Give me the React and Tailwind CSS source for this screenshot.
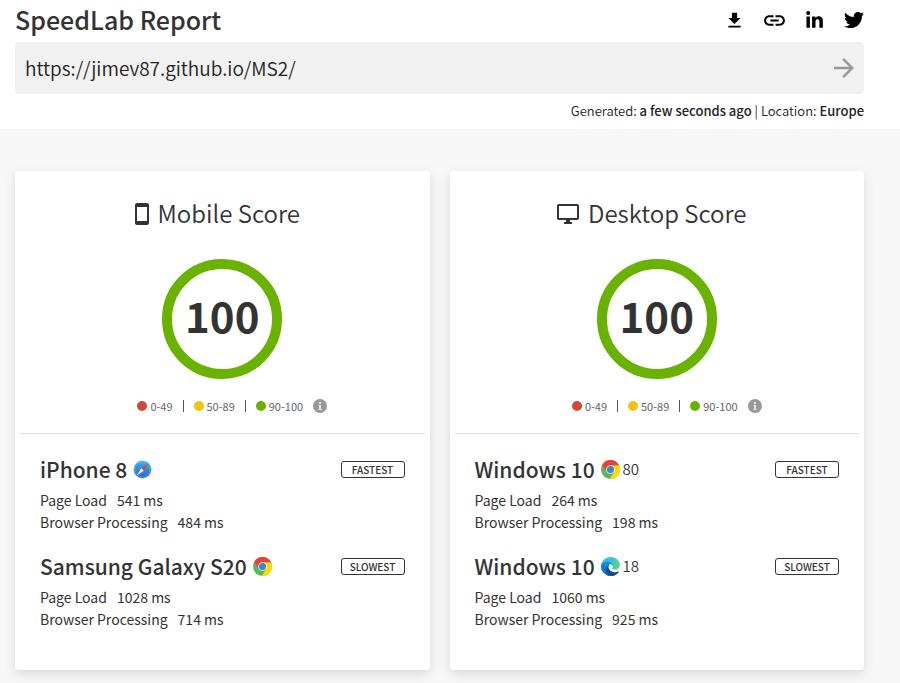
import React from "react";
import { FaLinkedinIn, FaTwitter } from "react-icons/fa";
import { MdInsertLink, MdArrowForward, MdGetApp } from "react-icons/md";

function PhoneIcon() {
  return (
    <svg viewBox="5 1 14 22" className="h-[22px] w-[14px] fill-current" aria-hidden="true">
      <path d="M17 1.01L7 1c-1.1 0-1.99.9-1.99 2v18c0 1.1.89 2 1.99 2h10c1.1 0 2-.9 2-2V3c0-1.1-.9-1.99-2-1.99zM17 19H7V5h10v14z" />
    </svg>
  );
}

function MonitorIcon() {
  return (
    <svg viewBox="1 2 22 20" className="h-5 w-[22px] fill-current" aria-hidden="true">
      <path d="M21 2H3c-1.1 0-2 .9-2 2v12c0 1.1.9 2 2 2h7v2H8v2h8v-2h-2v-2h7c1.1 0 2-.9 2-2V4c0-1.1-.9-2-2-2zm0 14H3V4h18v12z" />
    </svg>
  );
}

function InfoIcon() {
  return (
    <svg viewBox="0 0 14 14" className="size-[14px]" aria-hidden="true">
      <circle cx="7" cy="7" r="7" fill="#999" />
      <rect x="6" y="3" width="2" height="2" fill="#e6e6e6" />
      <path d="M5.500 6H8v4h.8v1H5.400v-1H6V7h-.5z" fill="#e6e6e6" />
    </svg>
  );
}

function ChromeIcon() {
  return (
    <svg viewBox="0 0 48 48" className="size-[19px]" role="img" aria-label="Chrome">
      <circle cx="24" cy="24" r="24" fill="#5bb75b" />
      <path d="M24 13H45.300A24 24 0 0 1 22 47.900L33.500 29.500z" fill="#ffdd00" />
      <path d="M3.200 12A24 24 0 0 1 45.300 13H24L14.500 29.500z" fill="#ee4035" />
      <circle cx="24" cy="24" r="11" fill="#fff" />
      <circle cx="24" cy="24" r="9" fill="#3f86c9" />
    </svg>
  );
}

function SafariIcon() {
  return (
    <svg viewBox="0 0 48 48" className="size-[19px]" role="img" aria-label="Safari">
      <defs>
        <linearGradient id="safari-dial" x1="0" y1="0" x2="0" y2="1">
          <stop offset="0" stopColor="#2fb4ee" />
          <stop offset="1" stopColor="#2b63c8" />
        </linearGradient>
      </defs>
      <circle cx="24" cy="24" r="23.500" fill="#c3d0df" />
      <circle cx="24" cy="24" r="21.500" fill="url(#safari-dial)" />
      <circle cx="24" cy="24" r="18.500" fill="none" stroke="#a9dcf7" strokeWidth="2" strokeDasharray="1.500 3.300" />
      <path d="M39 8L21 21L27 27z" fill="#f0353a" />
      <path d="M9 40L21 21L27 27z" fill="#f2f2f2" />
    </svg>
  );
}

function EdgeIcon() {
  return (
    <svg viewBox="0 0 256 256" className="size-[19px]" role="img" aria-label="Edge">
      <defs>
        <linearGradient id="edge-wave" x1="0" y1="0.300" x2="1" y2="0.600">
          <stop offset="0" stopColor="#2fb6ee" />
          <stop offset="0.500" stopColor="#35c1e1" />
          <stop offset="1" stopColor="#5edc6c" />
        </linearGradient>
        <linearGradient id="edge-body" x1="0" y1="0" x2="0" y2="1">
          <stop offset="0" stopColor="#1b9de2" />
          <stop offset="0.500" stopColor="#0a7ad6" />
          <stop offset="1" stopColor="#0669bd" />
        </linearGradient>
      </defs>
      <path d="M235.700 195.500a93.700 93.700 0 0 1-10.600 4.700 101.900 101.900 0 0 1-35.900 6.400c-47.300 0-88.500-32.500-88.500-74.300a31.500 31.500 0 0 1 16.400-27.300c-42.800 1.800-53.800 46.400-53.800 72.500 0 73.900 68.100 81.400 82.800 81.400 7.900 0 19.800-2.300 27-4.600l1.300-.4a128.300 128.300 0 0 0 66.600-52.800 4 4 0 0 0-5.300-5.600z" fill="#114a8b" />
      <path d="M105.700 241.400a79.200 79.200 0 0 1-22.700-21.300 80.700 80.700 0 0 1 29.500-120c3.200-1.500 8.500-4.100 15.600-4a32.400 32.400 0 0 1 25.700 13 31.900 31.900 0 0 1 6.300 18.700c0-.2 24.500-79.600-80-79.600-43.900 0-80 41.600-80 78.200a130.200 130.200 0 0 0 12.100 56 128 128 0 0 0 156.400 67 75.500 75.500 0 0 1-62.800-8z" fill="url(#edge-body)" />
      <path d="M152.300 148.900c-.9 1-3.400 2.500-3.400 5.600 0 2.600 1.700 5.200 4.800 7.300 14.300 10 41.400 8.600 41.500 8.600a59.600 59.600 0 0 0 30.300-8.300 61.400 61.400 0 0 0 30.400-52.900c.3-22.400-8-37.300-11.300-43.900C223.500 23.900 177.700 0 128 0A128 128 0 0 0 0 126.200c.5-36.500 36.800-66 80-66 3.500 0 23.500.3 42 10.100 16.300 8.600 24.900 19 30.800 29.200 6.200 10.700 7.300 24.100 7.300 29.500s-2.700 13.300-7.800 19.900z" fill="url(#edge-wave)" />
    </svg>
  );
}

const BROWSERS = { chrome: ChromeIcon, safari: SafariIcon, edge: EdgeIcon };

const CARDS = [
  {
    title: "Mobile Score",
    Icon: PhoneIcon,
    score: 100,
    devices: [
      { name: "iPhone 8", browser: "safari", tag: "FASTEST", load: 541, processing: 484 },
      { name: "Samsung Galaxy S20", browser: "chrome", tag: "SLOWEST", load: 1028, processing: 714 },
    ],
  },
  {
    title: "Desktop Score",
    Icon: MonitorIcon,
    score: 100,
    devices: [
      { name: "Windows 10", browser: "chrome", version: "80", tag: "FASTEST", load: 264, processing: 198 },
      { name: "Windows 10", browser: "edge", version: "18", tag: "SLOWEST", load: 1060, processing: 925 },
    ],
  },
];

function Legend() {
  return (
    <div className="mt-[18px] flex h-[18px] items-center justify-center gap-[10px] pl-5 text-[11px] text-[#666]">
      <span className="flex items-center gap-[3px]">
        <span className="size-[10px] rounded-full bg-[#d34836]" />
        0-49
      </span>
      <span className="h-3 w-px bg-[#555]" />
      <span className="flex items-center gap-[3px]">
        <span className="size-[10px] rounded-full bg-[#f0c30f]" />
        50-89
      </span>
      <span className="h-3 w-px bg-[#555]" />
      <span className="flex items-center gap-[3px]">
        <span className="size-[10px] rounded-full bg-[#69b200]" />
        90-100
      </span>
      <button type="button" aria-label="About the score">
        <InfoIcon />
      </button>
    </div>
  );
}

function Device({ name, browser, version, tag, load, processing }) {
  const Browser = BROWSERS[browser];
  return (
    <div>
      <div className="flex h-[30px] items-center pb-px">
        <h3 className="pb-[2px] text-[21px] leading-[30px] font-medium">{name}</h3>
        <span className="ml-[6px] flex items-center gap-[3px] text-[15px] font-[350]">
          <Browser />
          {version}
        </span>
        <span className="ml-auto flex h-[17px] w-16 items-center justify-center rounded-[3px] border border-[#333] text-[10px] leading-[15px] font-medium">
          {tag}
        </span>
      </div>
      <dl className="mt-1 text-[14px] leading-[22px]">
        <div className="flex gap-[10px]">
          <dt>Page Load</dt>
          <dd>{load} ms</dd>
        </div>
        <div className="flex gap-[10px]">
          <dt>Browser Processing</dt>
          <dd>{processing} ms</dd>
        </div>
      </dl>
    </div>
  );
}

function ScoreCard({ title, Icon, score, devices }) {
  return (
    <section className="rounded bg-white px-[5px] pt-7 pb-10 shadow-[0_4px_12px_rgba(0,0,0,0.12)]">
      <div className="flex h-[30px] items-center justify-center gap-[9px] pr-[10px]">
        <Icon />
        <h2 className="pb-[2px] text-[24px] leading-[30px] font-[350]">{title}</h2>
      </div>
      <div className="mx-auto mt-[30px] flex size-[120px] items-center justify-center rounded-full border-[10px] border-[#69b200] pb-2 text-[42px] leading-[60px] font-bold">
        {score}
      </div>
      <Legend />
      <hr className="mt-[18px] border-[#e0e0e0]" />
      <div className="flex flex-col gap-[19px] px-5 pt-[21px]">
        {devices.map((device) => (
          <Device key={device.tag} {...device} />
        ))}
      </div>
    </section>
  );
}

const SHARE_ITEM = "flex size-5 items-center justify-center";

export default function App() {
  return (
    <div className="min-h-screen bg-[#f7f7f7] font-['Noto_Sans_CJK_SC',sans-serif] text-[#333]">
      <header className="bg-white pr-9 pl-[15px]">
        <div className="flex h-[42px] items-center justify-between pb-[2px]">
          <h1 className="pb-[2px] text-[25px] leading-[38px] font-medium">SpeedLab Report</h1>
          <nav aria-label="Share" className="flex items-center gap-5 text-black">
            <button type="button" aria-label="Download report" className={SHARE_ITEM}>
              <MdGetApp className="size-[21px] shrink-0" />
            </button>
            <button type="button" aria-label="Copy link" className={SHARE_ITEM}>
              <MdInsertLink className="size-[25px] shrink-0" />
            </button>
            <a href="#linkedin" aria-label="Share on LinkedIn" className={SHARE_ITEM}>
              <FaLinkedinIn className="size-[19px] shrink-0" />
            </a>
            <a href="#twitter" aria-label="Share on Twitter" className={SHARE_ITEM}>
              <FaTwitter className="size-5 shrink-0" />
            </a>
          </nav>
        </div>
        <form className="flex h-[52px] items-center rounded bg-[#f1f1f1] pr-[5px] pl-[10px]">
          <input
            type="text"
            aria-label="Page address"
            defaultValue="https://jimev87.github.io/MS2/"
            className="min-w-0 flex-1 bg-transparent text-[19px] leading-[30px] font-[350] text-[#222] outline-none"
          />
          <button type="submit" aria-label="Run test" className="text-[#999]">
            <MdArrowForward className="size-[30px]" />
          </button>
        </form>
        <p className="h-[35px] text-right text-[13px] leading-[34px] font-[350] text-[#222]">
          Generated: <b className="font-medium">a few seconds ago</b> | Location: <b className="font-medium">Europe</b>
        </p>
      </header>
      <main className="grid grid-cols-2 gap-5 pt-[42px] pr-9 pb-[13px] pl-[15px]">
        {CARDS.map((card) => (
          <ScoreCard key={card.title} {...card} />
        ))}
      </main>
    </div>
  );
}
